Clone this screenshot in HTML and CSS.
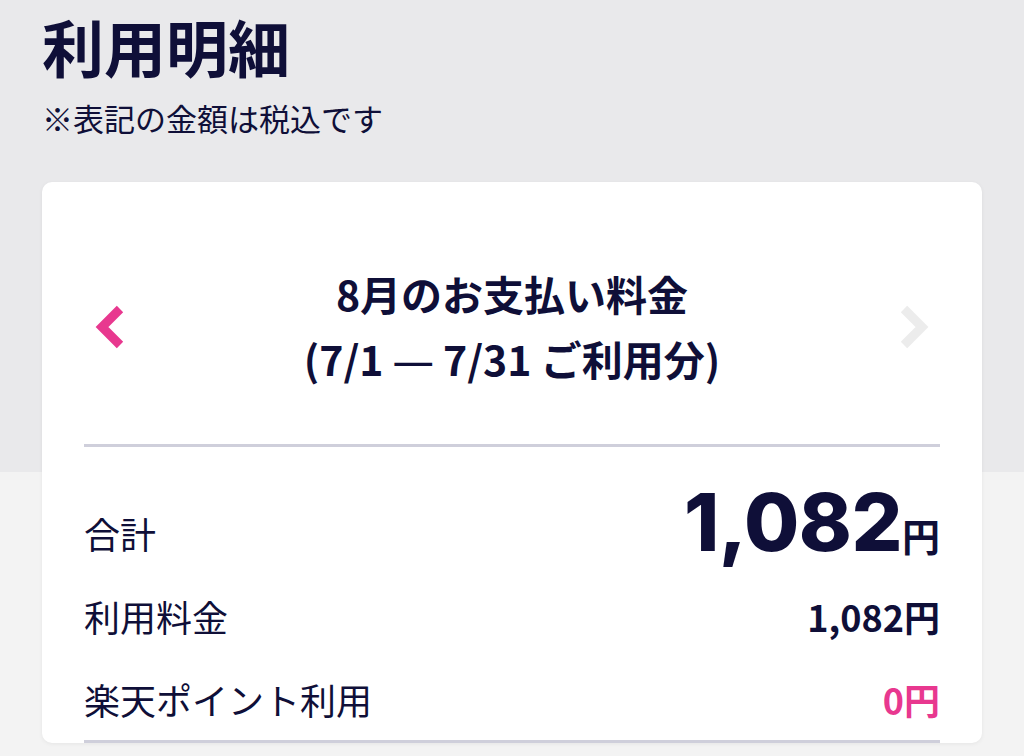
FILE: index.html
```html
<!DOCTYPE html>
<html lang="ja">
<head>
<meta charset="UTF-8" />
<meta name="viewport" content="width=device-width, initial-scale=1" />
<title>利用明細</title>
<link rel="stylesheet" href="styles.css">
</head>
<body>

<main class="page">
  <h1 class="page-title">利用明細</h1>
  <p class="page-note">※表記の金額は税込です</p>

  <section class="bill-card">
    <div class="bill-head">
      <button class="nav-arrow prev" aria-label="前の月">
        <svg viewBox="0 0 36 48" width="36" height="48"><path d="M30 6 L12 24 L30 42" fill="none" stroke="currentColor" stroke-width="9"/></svg>
      </button>
      <h2 class="bill-title">8月のお支払い料金<br>(7/1 <span class="dash">—</span> 7/31 ご利用分)</h2>
      <button class="nav-arrow next" aria-label="次の月" disabled>
        <svg viewBox="0 0 36 48" width="36" height="48"><path d="M6 6 L24 24 L6 42" fill="none" stroke="currentColor" stroke-width="9"/></svg>
      </button>
    </div>

    <dl class="bill-rows">
      <div class="row total">
        <dt>合計</dt>
        <dd><span class="num">1,082</span><span class="yen">円</span></dd>
      </div>
      <div class="row">
        <dt>利用料金</dt>
        <dd>1,082円</dd>
      </div>
      <div class="row">
        <dt>楽天ポイント利用</dt>
        <dd class="pink">0円</dd>
      </div>
    </dl>
  </section>
</main>

</body>
</html>
```

FILE: styles.css
```css
body {
  margin: 0;
  background: linear-gradient(#e9e9eb 0, #e9e9eb 472px, #f3f3f3 472px);
  color: #0f0f38;
  font-family: "Noto Sans CJK JP", "Noto Sans", sans-serif;
  min-height: 756px;
}
.page {
  padding: 6px 42px 0;
}
.page-title {
  margin: 0;
  font-size: 62px;
  line-height: 80px;
  font-weight: 700;
}
.page-note {
  margin: 10px 0 0;
  font-size: 31px;
  line-height: 44px;
}
.bill-card {
  margin-top: 42px;
  background: white;
  border-radius: 10px;
  box-shadow: 0 1px 4px rgba(0, 0, 0, 0.06);
  padding: 0 42px;
}
.bill-head {
  display: flex;
  align-items: center;
  justify-content: space-between;
  padding: 79px 0 51px;
  border-bottom: 3px solid #cfcfdb;
}
.bill-title {
  margin: 0;
  font-size: 41px;
  line-height: 65px;
  font-weight: 700;
  text-align: center;
}
.bill-title .dash {
  font-family: "Noto Sans", sans-serif;
  font-weight: 400;
}
.nav-arrow {
  background: none;
  border: none;
  padding: 0;
  width: 48px;
  display: flex;
  justify-content: center;
  color: #e8388f;
  cursor: pointer;
}
.nav-arrow.next {
  color: #ececec;
  cursor: default;
}
.bill-rows {
  margin: 0;
  padding: 44px 0 0;
  border-bottom: 3px solid #cfcfdb;
}
.row {
  display: flex;
  justify-content: space-between;
  align-items: center;
  height: 83px;
}
.row dt {
  font-size: 36px;
}
.row dd {
  margin: 0;
  font-size: 36px;
  font-weight: 700;
}
.row dd.pink {
  color: #e8388f;
}
.total dd {
  display: flex;
  align-items: baseline;
  margin-top: -22px;
}
.total .num {
  font-family: "Inter", "Noto Sans", sans-serif;
  font-size: 80px;
  font-weight: 800;
  letter-spacing: -0.5px;
  line-height: 1;
}
.total .yen {
  font-size: 38px;
}
```
